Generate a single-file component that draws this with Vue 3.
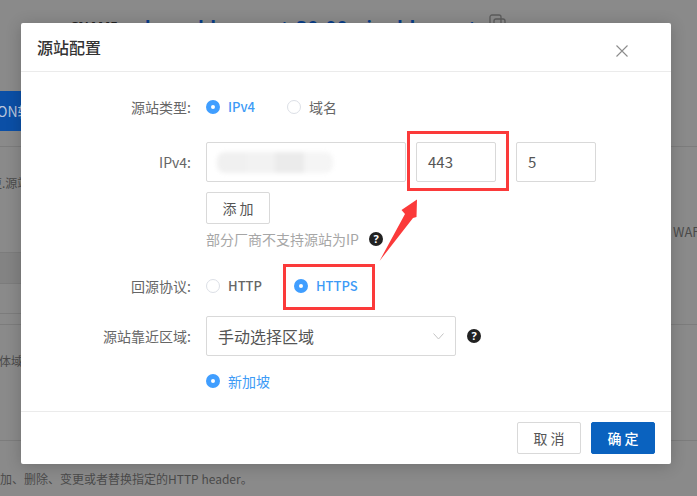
<script setup>
const sideLines = [146, 252, 283, 313, 324, 440]
const rightLines = [146, 324, 440]
</script>

<template>
  <div class="page">
    <div class="backdrop">
      <div class="band"></div>
      <div class="cname"><span class="cname-label">CNAME</span><span class="cname-value">dcaonbbseneot-30-00-einabbsenot</span>
        <svg class="copy" width="18" height="18" viewBox="0 0 18 18" fill="none" stroke="#5c5c5c" stroke-width="1.3"><rect x="1" y="1" width="11" height="13" rx="2"/><rect x="5" y="5" width="11" height="12" rx="2"/></svg>
      </div>
      <div class="blue-tab">ON转</div>
      <div class="bg-text t1">更.源站</div>
      <div class="bg-text t2">体域名</div>
      <div class="bg-text t3">添加、删除、变更或者替换指定的HTTP header。</div>
      <div class="bg-text t4">WAF</div>
      <i v-for="y in sideLines" :key="'l' + y" class="line left-line" :style="{ top: y + 'px' }"></i>
      <i v-for="y in rightLines" :key="'r' + y" class="line right-line" :style="{ top: y + 'px' }"></i>
    </div>

    <section class="modal">
      <header class="modal-head">
        <h2>源站配置</h2>
        <svg class="close" width="12" height="12" viewBox="0 0 12 12" fill="none" stroke="#8c8c8c" stroke-width="1.1"><path d="M.5.5l11 11M11.5.5l-11 11"/></svg>
      </header>

      <div class="modal-body">
        <div class="row row-type">
          <label class="label">源站类型:</label>
          <div class="radios">
            <span class="radio on bold gap-ipv4"><i class="dot"></i>IPv4</span>
            <span class="radio"><i class="dot"></i>域名</span>
          </div>
        </div>

        <div class="row row-ip">
          <label class="label">IPv4:</label>
          <div class="inputs">
            <div class="input ip"><div class="blur"><b></b><b></b><b></b><b></b></div></div>
            <div class="input port">443</div>
            <div class="input port last">5</div>
          </div>
        </div>

        <div class="row row-add">
          <span class="label"></span>
          <button class="btn add">添 加</button>
        </div>

        <div class="row row-hint">
          <span class="label"></span>
          <span class="hint">部分厂商不支持源站为IP</span>
          <svg class="help hint-help" width="14" height="14" viewBox="0 0 14 14"><circle cx="7" cy="7" r="7" fill="#222"/><text x="7" y="10.6" text-anchor="middle" class="help-mark">?</text></svg>
        </div>

        <div class="row row-proto">
          <label class="label">回源协议:</label>
          <div class="radios">
            <span class="radio bold gap-http"><i class="dot"></i>HTTP</span>
            <span class="radio on bold"><i class="dot"></i>HTTPS</span>
          </div>
        </div>

        <div class="row row-region">
          <label class="label">源站靠近区域:</label>
          <div class="select">
            <span>手动选择区域</span>
            <svg width="11" height="7" viewBox="0 0 11 7" fill="none" stroke="#c4c4c4" stroke-width="1"><path d="M.5.5l5 5.5 5-5.5"/></svg>
          </div>
          <svg class="help region-help" width="14" height="14" viewBox="0 0 14 14"><circle cx="7" cy="7" r="7" fill="#222"/><text x="7" y="10.6" text-anchor="middle" class="help-mark">?</text></svg>
        </div>

        <div class="row row-sg">
          <span class="label"></span>
          <span class="radio on"><i class="dot"></i>新加坡</span>
        </div>
      </div>

      <footer class="modal-foot">
        <button class="btn cancel">取 消</button>
        <button class="btn ok">确 定</button>
      </footer>
    </section>

    <!-- annotations drawn over the screenshot -->
    <i class="mark mark-port"></i>
    <i class="mark mark-https"></i>
    <svg class="arrow" width="40" height="63" viewBox="0 0 40 63"><path d="M.5 62 L26 15 L22.5 11 L38 .5 L37.5 18 L34 19 Z" fill="#fb3a3a"/></svg>
  </div>
</template>

<style>
html, body { margin: 0; background: #8a8a8a; }
</style>

<style scoped>
.page {
  position: relative;
  width: 697px;
  height: 496px;
  overflow: hidden;
  font-family: "Noto Sans CJK SC", "Noto Sans", sans-serif;
  color: #666;
}
.backdrop { position: absolute; inset: 0; background: #8a8a8a; }
.band { position: absolute; left: 0; top: 252px; width: 21px; height: 31px; background: #838383; }
.cname { position: absolute; left: 70px; top: 15px; display: flex; align-items: center; white-space: nowrap; }
.cname-label { font: 700 13px "Noto Sans", sans-serif; color: #222; width: 72px; flex: none; margin-top: -2px; }
.cname-value { font: 700 18px "Noto Sans", sans-serif; color: #0a3f8a; letter-spacing: .95px; margin-left: -3px; }
.copy { position: absolute; left: 419px; top: -1px; }
.blue-tab {
  position: absolute; left: 0; top: 91px; width: 21px; height: 40px; line-height: 40px;
  background: #0b4fa6; color: #b9c6dc; font-size: 14px; white-space: nowrap; overflow: hidden; text-indent: -3px;
}
.bg-text { position: absolute; font-size: 12px; line-height: 18px; color: #4a4a4a; white-space: nowrap; }
.t1 { left: -10px; top: 174px; width: 31px; overflow: hidden; }
.t2 { left: -1px; top: 352px; width: 22px; overflow: hidden; }
.t3 { left: -12px; top: 470px; }
.t4 { left: 673px; top: 223px; font-size: 13px; }
.line { position: absolute; height: 1px; background: #7c7c7c; }
.left-line { left: 0; width: 21px; }
.right-line { left: 671px; width: 26px; }

.modal {
  position: absolute; left: 21px; top: 23px; width: 650px; height: 441px;
  background: #fff; border-radius: 2px; box-shadow: 0 2px 16px rgba(0, 0, 0, .2);
  display: flex; flex-direction: column; box-sizing: border-box;
}
.modal-head {
  height: 49px; box-sizing: border-box; border-bottom: 1px solid #ebebeb;
  display: flex; align-items: center; justify-content: space-between; padding: 0 43px 0 16px;
}
.modal-head h2 { margin: 0; font-size: 16px; line-height: 24px; font-weight: 500; color: #333; }
.close { margin-top: 8px; }

.modal-body { flex: 1; }
.row { display: flex; align-items: center; }
.label {
  width: 185px; flex: none; text-align: right; padding-right: 15px; box-sizing: border-box;
  font-size: 14px; color: #666; line-height: 18px; font-weight: 400;
}
.row-type { margin-top: 25px; height: 20px; }
.row-ip { margin-top: 25px; height: 40px; }
.row-add { margin-top: 10px; height: 32px; }
.row-hint { margin-top: 5px; height: 20px; }
.row-proto { margin-top: 27px; height: 20px; }
.row-region { margin-top: 20px; height: 40px; }
.row-sg { margin-top: 15px; height: 20px; }

.radios { display: flex; align-items: center; }
.radio { display: inline-flex; align-items: center; font-size: 14px; color: #666; line-height: 18px; }
.radio.bold { font-weight: 500; font-size: 13px; }
.radio.on { color: #3d9bf6; }
.dot {
  width: 14px; height: 14px; box-sizing: border-box; border: 1px solid #dcdfe6; border-radius: 50%;
  margin-right: 8px; background: #fff;
}
.on .dot { border: 5px solid #409eff; }
.gap-ipv4 { margin-right: 32px; }
.gap-http { margin-right: 32px; }

.inputs { display: flex; gap: 10px; }
.input {
  height: 40px; box-sizing: border-box; border: 1px solid #d9d9d9; border-radius: 2px;
  font-size: 15px; line-height: 38px; color: #555; padding: 0 11px;
}
.ip { width: 200px; position: relative; }
.port { width: 80px; }
.last { margin-left: 10px; }
.blur {
  position: absolute; left: 10px; top: 9px; width: 116px; height: 21px; display: flex;
  filter: blur(2px); border-radius: 8px; overflow: hidden;
}
.blur b { flex: 1; background: #f0f0f0; }
.blur b:nth-child(2) { background: #f2f2f2; }
.blur b:nth-child(3) { background: #ebebeb; }
.blur b:nth-child(4) { background: #f5f5f5; }

.btn {
  font-family: inherit; font-size: 14px; border-radius: 2px; box-sizing: border-box; padding: 0; cursor: pointer;
}
.add { width: 64px; height: 32px; background: #fff; border: 1px solid #d9d9d9; color: #555; }
.hint { font-size: 14px; color: #a6a6a6; line-height: 18px; white-space: nowrap; }
.help { flex: none; }
.help-mark { font: 700 11px "Noto Sans", sans-serif; fill: #fff; }
.hint-help { margin-left: 10px; }
.region-help { margin-left: 11px; }

.select {
  width: 250px; height: 40px; box-sizing: border-box; border: 1px solid #d9d9d9; border-radius: 2px;
  display: flex; align-items: center; justify-content: space-between; padding: 0 11px 0 11px;
  font-size: 16px; color: #555;
}

.modal-foot {
  height: 53px; box-sizing: border-box; border-top: 1px solid #ebebeb;
  display: flex; justify-content: flex-end; align-items: flex-start; gap: 10px; padding: 10px 16px 0 0;
}
.cancel { width: 64px; height: 32px; background: #fff; border: 1px solid #d9d9d9; color: #555; }
.ok { width: 64px; height: 32px; background: #0a62bf; border: 1px solid #0a62bf; color: #fff; font-weight: 500; }

.mark { position: absolute; box-sizing: border-box; border: 3px solid #fb3a3a; }
.mark-port { left: 407px; top: 131px; width: 102px; height: 60px; }
.mark-https { left: 283px; top: 264px; width: 92px; height: 46px; }
.arrow { position: absolute; left: 379px; top: 199px; }
</style>
